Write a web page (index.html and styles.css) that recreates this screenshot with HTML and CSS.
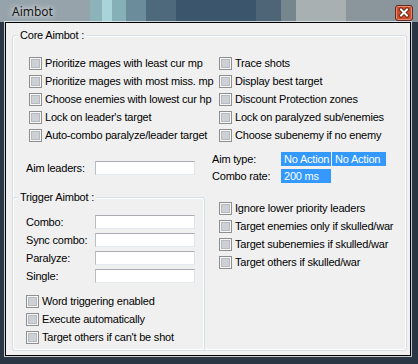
FILE: index.html
```html
<!DOCTYPE html>
<html>
<head>
<meta charset="utf-8">
<title>Aimbot</title>
<link rel="stylesheet" href="styles.css">
</head>
<body>
<div class="window">
  <div class="titlebar">
    <div class="tb-bg">
      <span class="seg s1"></span><span class="seg s2"></span><span class="seg s3"></span><span class="seg s4"></span><span class="seg s5"></span><span class="seg s6"></span><span class="seg s7"></span><span class="seg s8"></span><span class="seg s9"></span><span class="seg s10"></span><span class="seg s11"></span>
    </div>
    <div class="tb-content">
      <span class="title">Aimbot</span>
      <div class="close">
        <svg width="16" height="14" viewBox="0 0 16 14">
          <path d="M5 3.5 L11 9.5 M11 3.5 L5 9.5" stroke="#4a1a10" stroke-width="3.6" stroke-linecap="square"/>
          <path d="M5 3.5 L11 9.5 M11 3.5 L5 9.5" stroke="#ffffff" stroke-width="2" stroke-linecap="square"/>
        </svg>
      </div>
    </div>
  </div>
  <div class="client">
    <div class="group core">
      <div class="group-title">Core Aimbot :</div>
      <div class="core-body">
        <div class="col col-left">
          <div class="checks checks-top">
            <div class="check"><span class="cb"></span><span>Prioritize mages with least cur mp</span></div>
            <div class="check"><span class="cb"></span><span>Prioritize mages with most miss. mp</span></div>
            <div class="check"><span class="cb"></span><span>Choose enemies with lowest cur hp</span></div>
            <div class="check"><span class="cb"></span><span>Lock on leader's target</span></div>
            <div class="check"><span class="cb"></span><span>Auto-combo paralyze/leader target</span></div>
          </div>
          <div class="field field-aim">
            <span class="field-label">Aim leaders:</span><span class="textbox"></span>
          </div>
          <div class="group trigger">
            <div class="group-title">Trigger Aimbot :</div>
            <div class="fields">
              <div class="field"><span class="field-label">Combo:</span><span class="textbox"></span></div>
              <div class="field"><span class="field-label">Sync combo:</span><span class="textbox"></span></div>
              <div class="field"><span class="field-label">Paralyze:</span><span class="textbox"></span></div>
              <div class="field"><span class="field-label">Single:</span><span class="textbox"></span></div>
            </div>
            <div class="checks checks-trigger">
              <div class="check"><span class="cb"></span><span>Word triggering enabled</span></div>
              <div class="check"><span class="cb"></span><span>Execute automatically</span></div>
              <div class="check"><span class="cb"></span><span>Target others if can't be shot</span></div>
            </div>
          </div>
        </div>
        <div class="col col-right">
          <div class="checks checks-top checks-right">
            <div class="check"><span class="cb"></span><span>Trace shots</span></div>
            <div class="check"><span class="cb"></span><span>Display best target</span></div>
            <div class="check"><span class="cb"></span><span>Discount Protection zones</span></div>
            <div class="check"><span class="cb"></span><span>Lock on paralyzed sub/enemies</span></div>
            <div class="check"><span class="cb"></span><span>Choose subenemy if no enemy</span></div>
          </div>
          <div class="combos">
            <div class="combo-row"><span class="combo-label">Aim type:</span><span class="sel sel-a">No Action</span><span class="sel sel-b">No Action</span></div>
            <div class="combo-row"><span class="combo-label">Combo rate:</span><span class="sel sel-a">200 ms</span></div>
          </div>
          <div class="checks checks-right checks-lower">
            <div class="check"><span class="cb"></span><span>Ignore lower priority leaders</span></div>
            <div class="check"><span class="cb"></span><span>Target enemies only if skulled/war</span></div>
            <div class="check"><span class="cb"></span><span>Target subenemies if skulled/war</span></div>
            <div class="check"><span class="cb"></span><span>Target others if skulled/war</span></div>
          </div>
        </div>
      </div>
    </div>
  </div>
</div>
</body>
</html>
```

FILE: styles.css
```css
* { box-sizing: border-box; }
html, body { margin: 0; padding: 0; }
body {
  width: 418px;
  height: 364px;
  overflow: hidden;
  font-family: "Liberation Sans", Arial, sans-serif;
  font-size: 11px;
  letter-spacing: -0.2px;
  color: #000;
  background: #1f2b37;
}
.window {
  width: 418px;
  height: 364px;
  display: flex;
  flex-direction: column;
  background-color: #2a3643;
}
.titlebar {
  height: 22px;
  flex: none;
  display: grid;
  grid-template-columns: 418px;
  grid-template-rows: 22px;
}
.titlebar > * {
  grid-column: 1;
  grid-row: 1;
}
.tb-bg {
  display: flex;
  height: 22px;
}
.seg { display: block; height: 22px; flex: none; }
.s1 { width: 90px; background-color: #97a3ab; }
.s2 { width: 12px; background-color: #8cb3ba; }
.s3 { width: 10px; background-color: #a9d4d8; }
.s4 { width: 14px; background-color: #86b0b8; }
.s5 { width: 20px; background-color: #6a8c9b; }
.s6 { width: 30px; background-color: #4f697c; }
.s7 { width: 80px; background-color: #3b566c; }
.s8 { width: 25px; background-color: #4d6577; }
.s9 { width: 15px; background-color: #76868f; }
.s10 { width: 50px; background-color: #a9b0b1; }
.s11 { width: 72px; background-color: #8a959c; }
.tb-content {
  display: flex;
  align-items: flex-start;
  justify-content: space-between;
  padding: 0 5px 0 12px;
}
.title {
  font-family: "Noto Sans", "Liberation Sans", sans-serif;
  font-size: 12px;
  letter-spacing: 0;
  line-height: 14px;
  padding-top: 5px;
  color: #151515;
  text-shadow: 0 0 5px rgba(255,255,255,0.85), 0 0 9px rgba(255,255,255,0.6);
}
.close {
  margin-top: 5px;
  width: 18px;
  height: 16px;
  border: 1px solid #5e2a1e;
  border-radius: 3px;
  display: flex;
  align-items: center;
  justify-content: center;
  background-color: #cf4a2a;
  box-shadow: inset 0 0 0 1px rgba(255,220,200,0.45);
}
.close svg { display: block; }
.client {
  flex: 1;
  margin: 0 7px 8px 5px;
  border: 1px solid #000;
  background: #f0f0f0;
  box-shadow: 0 0 0 1px rgba(235,240,244,0.8);
}
.group {
  border: 1px solid #d5dfe5;
  border-radius: 3px;
  box-shadow: inset 0 0 0 1px #ffffff;
  display: flex;
  flex-direction: column;
}
.group-title {
  display: block;
  width: fit-content;
  margin: -7px 0 0 5px;
  padding: 0 2px;
  line-height: 13px;
  background: #f0f0f0;
  white-space: nowrap;
}
.core {
  margin: 12px 0 0 6px;
  width: 395px;
  height: 316px;
}
.core-body {
  flex: 1;
  display: grid;
  grid-template-columns: 192px 1fr;
}
.col {
  display: flex;
  flex-direction: column;
}
.checks {
  display: flex;
  flex-direction: column;
}
.checks-top { margin-top: 12px; padding-left: 16px; }
.checks-right { padding-left: 14px; }
.checks-lower { margin-top: 16px; }
.check {
  height: 18px;
  display: flex;
  align-items: center;
  white-space: nowrap;
}
.cb {
  flex: none;
  width: 13px;
  height: 13px;
  margin-right: 3px;
  border: 1px solid #8e8f8f;
  background: #f6f6f6;
  display: flex;
  align-items: center;
  justify-content: center;
}
.cb::before {
  content: "";
  display: block;
  width: 9px;
  height: 9px;
  background-color: #cdd0d4;
  box-shadow: inset 0 0 0 1px rgba(120,125,130,0.25);
}
.field {
  height: 14px;
  display: flex;
  align-items: center;
  padding-left: 13px;
  white-space: nowrap;
}
.field-label {
  width: 69px;
  flex: none;
}
.textbox {
  display: block;
  width: 100px;
  height: 14px;
  background: #fff;
  border: 1px solid;
  border-color: #abadb3 #dfe3e8 #e3e9ef #b9bcc2;
}
.field-aim { margin-top: 17px; }
.trigger {
  margin: 22px 0 0 -1px;
  width: 193px;
  height: 154px;
}
.fields {
  margin-top: 11px;
  display: flex;
  flex-direction: column;
  gap: 4px;
}
.checks-trigger {
  margin-top: 9px;
  padding-left: 13px;
}
.combos {
  margin-top: 8px;
  display: flex;
  flex-direction: column;
  gap: 3px;
  padding-left: 7px;
}
.combo-row {
  height: 14px;
  display: flex;
  align-items: center;
  white-space: nowrap;
}
.combo-label {
  width: 69px;
  flex: none;
}
.sel {
  display: block;
  height: 14px;
  line-height: 14px;
  padding-left: 3px;
  background: #3399ff;
  color: #fff;
  overflow: hidden;
  white-space: nowrap;
}
.sel-a { width: 50px; }
.sel-b { width: 54px; margin-left: 1px; }
```
